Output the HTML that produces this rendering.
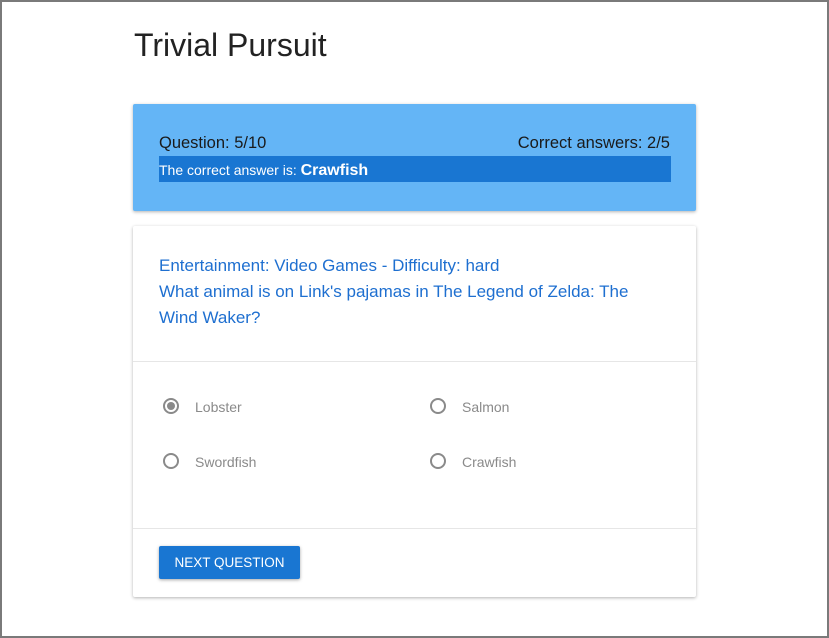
<!DOCTYPE html>
<html><head><style>
*{box-sizing:border-box;margin:0;padding:0}
html,body{width:829px;height:638px;overflow:hidden;background:#fff}
body{font-family:"Liberation Sans",sans-serif;position:relative;border:2px solid #7a7a7a}
.abs{position:absolute}
h1{position:absolute;left:132px;top:25px;font-size:32px;font-weight:400;color:#222}
.blue{left:131px;top:102px;width:563px;height:107px;background:#64b5f6;box-shadow:0 1px 3px rgba(0,0,0,.3);border-radius:2px}
.t{font-size:16.5px;color:#1a1a1a}
.bar{left:157px;top:154px;width:512px;height:26px;background:#1976d2;color:#fff;font-size:14px;line-height:28px}
.card{left:131px;top:224px;width:563px;height:371px;background:#fff;box-shadow:0 1px 3px rgba(0,0,0,.3);border-radius:2px}
.q{left:157px;font-size:17px;color:#1e6fd0;white-space:nowrap}
.hr{left:131px;width:563px;height:1px;background:#e6e6e6}
.r{width:16px;height:16px;border:2px solid #8a8a8a;border-radius:50%}
.lab{font-size:14px;color:#8a8a8a}
.btn{left:157px;top:544px;width:141px;height:33px;background:#1976d2;color:#fff;font-size:13.5px;text-align:center;line-height:33px;border-radius:2px;box-shadow:0 1px 3px rgba(0,0,0,.35)}
</style></head><body>
<h1>Trivial Pursuit</h1>
<div class="abs blue"></div>
<div class="abs t" style="left:157px;top:132px">Question: 5/10</div>
<div class="abs t" style="right:157px;top:132px">Correct answers: 2/5</div>
<div class="abs bar">The correct answer is: <b style="font-size:16px">Crawfish</b></div>
<div class="abs card"></div>
<div class="abs q" style="top:254px">Entertainment: Video Games - Difficulty: hard</div>
<div class="abs q" style="top:280px">What animal is on Link's pajamas in The Legend of Zelda: The</div>
<div class="abs q" style="top:306px">Wind Waker?</div>
<div class="abs hr" style="top:359px"></div>
<div class="abs r" style="left:161px;top:396px"><div style="width:8px;height:8px;border-radius:50%;background:#8a8a8a;margin:2px"></div></div>
<div class="abs lab" style="left:193px;top:397px">Lobster</div>
<div class="abs r" style="left:428px;top:396px"></div>
<div class="abs lab" style="left:460px;top:397px">Salmon</div>
<div class="abs r" style="left:161px;top:451px"></div>
<div class="abs lab" style="left:193px;top:452px">Swordfish</div>
<div class="abs r" style="left:428px;top:451px"></div>
<div class="abs lab" style="left:460px;top:452px">Crawfish</div>
<div class="abs hr" style="top:526px"></div>
<div class="abs btn">NEXT QUESTION</div>
</body></html>
